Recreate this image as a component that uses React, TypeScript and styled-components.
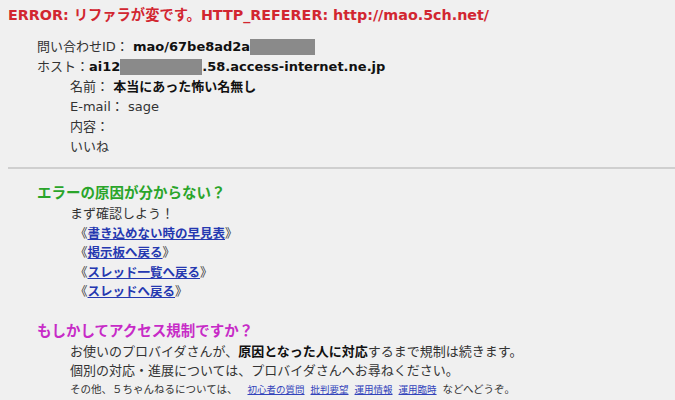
import React from "react";
import styled, { createGlobalStyle } from "styled-components";

const GlobalStyle = createGlobalStyle`
  html, body {
    margin: 0;
    padding: 0;
    background: #f0f0f0;
  }
  body {
    font-family: "DejaVu Sans", "Noto Sans CJK JP", sans-serif;
    color: #333;
    font-size: 13px;
  }
`;

const Page = styled.div`
  width: 675px;
  height: 400px;
  overflow: hidden;
  padding: 5px 0 0 8px;
  box-sizing: border-box;
`;

const ErrorTitle = styled.h1`
  margin: 0;
  font-size: 14.3px;
  line-height: 20px;
  font-weight: bold;
  color: #d22630;
`;

const InfoBlock = styled.div`
  padding: 12px 0 0 29px;
  display: flex;
  flex-direction: column;
`;

const Row = styled.div<{ $indent?: number }>`
  line-height: 20px;
  height: 20px;
  padding-left: ${(p) => p.$indent ?? 0}px;
  white-space: nowrap;
  display: flex;
  align-items: center;
`;

const Strong = styled.b`
  color: #111;
  font-weight: bold;
`;

const Redact = styled.span<{ $w: number }>`
  display: inline-block;
  width: ${(p) => p.$w}px;
  height: 16px;
  background: #8a8a8a;
`;

const Rule = styled.hr`
  margin: 10px 0 0 0;
  border: none;
  border-top: 2px solid #cfcfcf;
  height: 0;
`;

const Section = styled.section<{ $top: number }>`
  padding: ${(p) => p.$top}px 0 0 29px;
`;

const Heading = styled.h2<{ $color: string }>`
  margin: 0;
  font-size: 14.5px;
  line-height: 22px;
  font-weight: bold;
  color: ${(p) => p.$color};
`;

const Body = styled.div`
  padding-left: 33px;
  display: flex;
  flex-direction: column;
`;

const Line = styled.div<{ $small?: boolean }>`
  line-height: ${(p) => (p.$small ? "16px" : "19.5px")};
  font-size: ${(p) => (p.$small ? "10.5px" : "13px")};
  white-space: nowrap;
`;

const LinkLine = styled.div`
  line-height: 19.5px;
  padding-left: 5px;
  font-size: 12.5px;
  color: #333;
  white-space: nowrap;
`;

const A = styled.a`
  color: #2538b0;
  font-weight: bold;
  text-decoration: underline;
`;

const SmallLinks = styled.span`
  margin-left: 10px;
  font-size: 9.5px;
`;

const SmallA = styled.a`
  color: #3344bb;
  text-decoration: underline;
  margin-right: 6px;
`;

const links = [
  "書き込めない時の早見表",
  "掲示板へ戻る",
  "スレッド一覧へ戻る",
  "スレッドへ戻る",
];

const small = ["初心者の質問", "批判要望", "運用情報", "運用臨時"];

export default function App() {
  return (
    <Page>
      <GlobalStyle />
      <ErrorTitle>ERROR: リファラが変です。HTTP_REFERER: http://mao.5ch.net/</ErrorTitle>
      <InfoBlock>
        <Row>
          問い合わせID：&nbsp;<Strong>mao/67be8ad2a</Strong>
          <Redact $w={65} />
        </Row>
        <Row>
          ホスト：<Strong>ai12</Strong>
          <Redact $w={82} />
          <Strong>.58.access-internet.ne.jp</Strong>
        </Row>
        <Row $indent={33}>
          名前：&nbsp;<Strong>本当にあった怖い名無し</Strong>
        </Row>
        <Row $indent={33}>E-mail：&nbsp;sage</Row>
        <Row $indent={33}>内容：</Row>
        <Row $indent={33}>いいね</Row>
      </InfoBlock>
      <Rule />
      <Section $top={13}>
        <Heading $color="#2aa52a">エラーの原因が分からない？</Heading>
        <Body>
          <Line>まず確認しよう！</Line>
          {links.map((l) => (
            <LinkLine key={l}>
              《<A href="#">{l}</A>》
            </LinkLine>
          ))}
        </Body>
      </Section>
      <Section $top={18}>
        <Heading $color="#c72bc7">もしかしてアクセス規制ですか？</Heading>
        <Body>
          <Line>
            お使いのプロバイダさんが、<Strong>原因となった人に対応</Strong>するまで規制は続きます。
          </Line>
          <Line>個別の対応・進展については、プロバイダさんへお尋ねください。</Line>
          <Line $small>
            その他、５ちゃんねるについては、
            <SmallLinks>
              {small.map((s) => (
                <SmallA key={s} href="#">
                  {s}
                </SmallA>
              ))}
            </SmallLinks>
            などへどうぞ。
          </Line>
        </Body>
      </Section>
    </Page>
  );
}
